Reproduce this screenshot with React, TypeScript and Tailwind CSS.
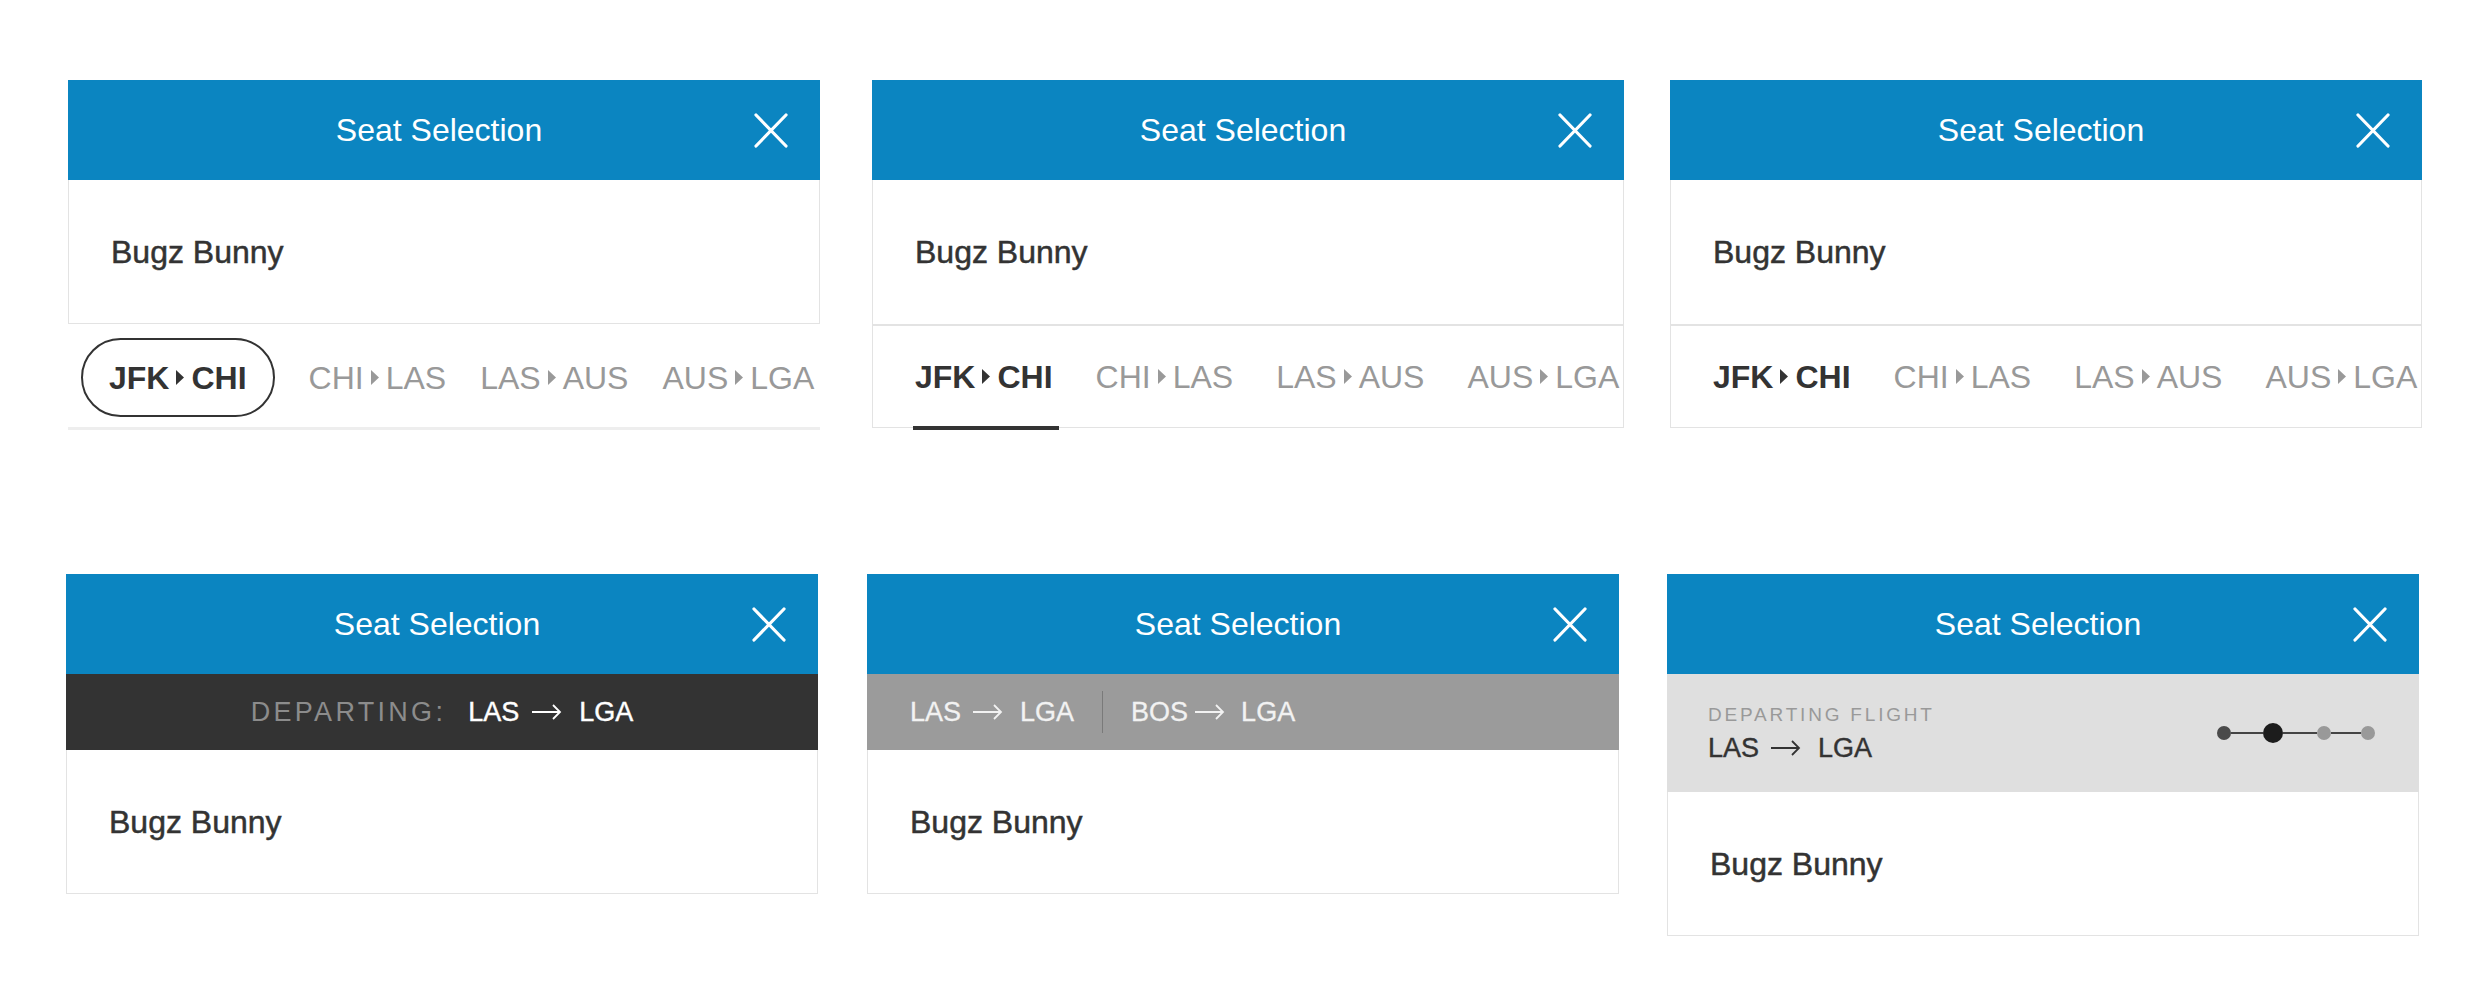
import React from 'react';

const routes = [
  ['JFK', 'CHI'],
  ['CHI', 'LAS'],
  ['LAS', 'AUS'],
  ['AUS', 'LGA'],
];

function CloseIcon() {
  return (
    <svg width="34" height="35" viewBox="0 0 34 35" fill="none" stroke="white" strokeWidth="3.2" strokeLinecap="round">
      <path d="M2 2 L32 33 M32 2 L2 33" />
    </svg>
  );
}

function Caret() {
  return (
    <svg width="8" height="15" viewBox="0 0 8 15" className="shrink-0">
      <path d="M0 0 L8 7.5 L0 15 Z" fill="currentColor" />
    </svg>
  );
}

function Arrow({ className = '' }: { className?: string }) {
  return (
    <svg width="30" height="16" viewBox="0 0 30 16" fill="none" stroke="currentColor" strokeWidth="1.8" className={`shrink-0 ${className}`}>
      <path d="M0 8 H28 M21 1 L28 8 L21 15" />
    </svg>
  );
}

function Header() {
  return (
    <div className="h-[100px] bg-[#0b85c1] grid grid-cols-[1fr_auto_1fr] items-center">
      <div />
      <span className="mr-[10px] text-white text-[32px] leading-none">Seat Selection</span>
      <div className="flex justify-end pr-[32px]">
        <CloseIcon />
      </div>
    </div>
  );
}

function Name() {
  return (
    <span className="text-[32px] leading-none text-[#333] [-webkit-text-stroke:0.5px_currentColor]">Bugz Bunny</span>
  );
}

function Route({ from, to, active }: { from: string; to: string; active?: boolean }) {
  return (
    <span
      className={`flex items-center gap-[7px] text-[32px] leading-none whitespace-nowrap ${
        active ? 'font-bold text-[#333]' : 'text-[#999]'
      }`}
    >
      {from}
      <Caret />
      {to}
    </span>
  );
}

function Body() {
  return (
    <div className="h-[144px] border-x border-b border-[#e3e3e3] flex items-center pl-[42px]">
      <Name />
    </div>
  );
}

function PillCard() {
  return (
    <div className="w-[752px] shrink-0">
      <Header />
      <Body />
      <div className="h-[106px] pt-[4px] border-b-[3px] border-[#eeeeee] flex items-center pl-[13px] gap-[34px] overflow-hidden">
        <div className="h-[79px] px-[26px] rounded-full border-2 border-[#333] flex items-center">
          <Route from="JFK" to="CHI" active />
        </div>
        {routes.slice(1).map(([f, t]) => (
          <Route key={f} from={f} to={t} />
        ))}
      </div>
    </div>
  );
}

function TabCard({ underline }: { underline?: boolean }) {
  return (
    <div className="w-[752px] shrink-0">
      <Header />
      <div className="h-[146px] border-x border-b-2 border-[#e3e3e3] flex items-center pl-[42px]">
        <Name />
      </div>
      <div className="h-[102px] border-x border-b border-[#e3e3e3] flex items-stretch pl-[42px] gap-[43px] overflow-x-clip">
        {routes.map(([f, t], i) => (
          <div key={f} className="relative flex items-center">
            <Route from={f} to={t} active={i === 0} />
            {underline && i === 0 && (
              <span className="absolute left-[-2px] right-[-6px] -bottom-[3px] h-[4px] bg-[#333]" />
            )}
          </div>
        ))}
      </div>
    </div>
  );
}

function DarkBarCard() {
  return (
    <div className="w-[752px] shrink-0">
      <Header />
      <div className="h-[76px] bg-[#333333] flex items-center justify-center text-[27px] leading-none">
        <span className="text-[#8c8c8c] tracking-[3.3px] mr-[22px]">DEPARTING:</span>
        <span className="text-white [-webkit-text-stroke:0.4px_currentColor]">LAS</span>
        <Arrow className="text-white ml-[13px] mr-[17px]" />
        <span className="text-white [-webkit-text-stroke:0.4px_currentColor]">LGA</span>
      </div>
      <Body />
    </div>
  );
}

function GrayBarCard() {
  return (
    <div className="w-[752px] shrink-0">
      <Header />
      <div className="h-[76px] bg-[#9b9b9b] flex items-center pl-[43px] text-[27px] leading-none text-[#f2f2f2] [-webkit-text-stroke:0.3px_currentColor]">
        <span>LAS</span>
        <Arrow className="ml-[12px] mr-[17px]" />
        <span>LGA</span>
        <span className="w-px h-[42px] bg-[#7a7a7a] mx-[28px]" />
        <span>BOS</span>
        <Arrow className="ml-[7px] mr-[16px]" />
        <span>LGA</span>
      </div>
      <Body />
    </div>
  );
}

function Steps() {
  return (
    <div className="flex items-center">
      <span className="w-[14px] h-[14px] rounded-full bg-[#4a4a4a]" />
      <span className="w-[32px] h-[2px] bg-[#444]" />
      <span className="w-[20px] h-[20px] rounded-full bg-[#1c1c1c]" />
      <span className="w-[34px] h-[2px] bg-[#444]" />
      <span className="w-[14px] h-[14px] rounded-full bg-[#999]" />
      <span className="w-[30px] h-[2px] bg-[#444]" />
      <span className="w-[14px] h-[14px] rounded-full bg-[#999]" />
    </div>
  );
}

function StepsCard() {
  return (
    <div className="w-[752px] shrink-0">
      <Header />
      <div className="h-[118px] bg-[#dfdfdf] flex items-center justify-between pl-[41px] pr-[44px]">
        <div>
          <div className="text-[19px] leading-[22px] tracking-[2.8px] text-[#999]">DEPARTING FLIGHT</div>
          <div className="mt-[7px] flex items-center text-[27px] leading-[30px] text-[#333] [-webkit-text-stroke:0.4px_currentColor]">
            <span>LAS</span>
            <Arrow className="ml-[12px] mr-[17px]" />
            <span>LGA</span>
          </div>
        </div>
        <Steps />
      </div>
      <Body />
    </div>
  );
}

export default function App() {
  return (
    <div className="min-h-screen bg-white pt-[80px] font-['Liberation_Sans',Arial,sans-serif]">
      <div className="flex items-start pl-[68px]">
        <PillCard />
        <div className="ml-[52px]">
          <TabCard underline />
        </div>
        <div className="ml-[46px]">
          <TabCard />
        </div>
      </div>
      <div className="flex items-start pl-[66px] mt-[144px]">
        <DarkBarCard />
        <div className="ml-[49px]">
          <GrayBarCard />
        </div>
        <div className="ml-[48px]">
          <StepsCard />
        </div>
      </div>
    </div>
  );
}
